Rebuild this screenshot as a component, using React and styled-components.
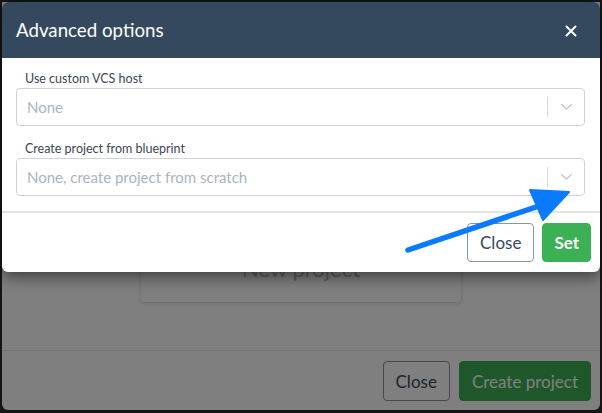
import React from "react";
import styled, { createGlobalStyle } from "styled-components";

const GlobalStyle = createGlobalStyle`
  html, body {
    margin: 0;
    padding: 0;
    background: #2b2b2b;
    font-family: "Lato", "Open Sans", sans-serif;
  }
`;

const Screen = styled.div`
  position: relative;
  width: 602px;
  height: 413px;
  box-sizing: border-box;
  padding: 2px 2px 3px 2px;
  overflow: hidden;
`;

const BaseDialog = styled.div`
  height: 100%;
  display: flex;
  flex-direction: column;
  background: #fff;
  border-radius: 0 0 6px 6px;
  overflow: hidden;
`;

const BaseBody = styled.div`
  flex: 1;
  display: flex;
  justify-content: center;
  align-items: flex-end;
  padding-bottom: 48px;
`;

const Card = styled.div`
  width: 320px;
  height: 80px;
  box-sizing: border-box;
  padding-top: 34px;
  text-align: center;
  font-size: 22px;
  line-height: 26px;
  color: #bcbcbc;
  border-radius: 4px;
  box-shadow: 0 1px 4px rgba(0, 0, 0, 0.18);
`;

const Footer = styled.div`
  display: flex;
  justify-content: flex-end;
  gap: ${(p) => p.gap}px;
  padding: 10px 9px ${(p) => p.bottom}px;
  border-top: 1px solid #e3e3e3;
`;

const Button = styled.button`
  height: ${(p) => p.h}px;
  padding: 0 ${(p) => p.px}px;
  border-radius: 4px;
  font-family: "Lato", "Open Sans", sans-serif;
  font-size: 17px;
  cursor: pointer;
  border: 1px solid ${(p) => (p.primary ? "#3cb054" : "#8796a3")};
  background: ${(p) => (p.primary ? "#3cb054" : "#fff")};
  color: ${(p) => (p.primary ? "#fff" : "#34495e")};
  font-weight: ${(p) => (p.bold ? 700 : 400)};
`;

const Overlay = styled.div`
  position: absolute;
  inset: 0;
  background: rgba(0, 0, 0, 0.5);
`;

const Modal = styled.div`
  position: absolute;
  left: 2px;
  right: 2px;
  top: 2px;
  height: 270px;
  background: #fff;
  border-radius: 6px;
  overflow: hidden;
  box-shadow: 0 5px 15px rgba(0, 0, 0, 0.5);
  display: flex;
  flex-direction: column;
`;

const Header = styled.div`
  height: 56px;
  flex-shrink: 0;
  background: #34495e;
  display: flex;
  align-items: center;
  justify-content: space-between;
  padding: 0 23px 0 14px;
  color: #fff;
`;

const Title = styled.h4`
  margin: 0;
  font-size: 18.7px;
  font-weight: 400;
  padding-bottom: 1px;
`;

const CloseX = styled.span`
  display: flex;
  padding-top: 1px;
`;

const Body = styled.div`
  padding: 13px 15px 15px 14px;
  display: flex;
  flex-direction: column;
  gap: 15px;
`;

const Field = styled.div`
  display: flex;
  flex-direction: column;
`;

const Label = styled.label`
  font-size: 12.5px;
  line-height: 16px;
  color: #3b4653;
  padding-left: 9px;
  margin-bottom: 1px;
`;

const Select = styled.div`
  height: 38px;
  box-sizing: border-box;
  border: 1px solid #cfd3d7;
  border-radius: 4px;
  display: flex;
  align-items: center;
`;

const Placeholder = styled.span`
  flex: 1;
  padding-left: 10px;
  font-size: 15px;
  color: #abb4be;
`;

const Indicator = styled.span`
  width: 36px;
  height: 20px;
  border-left: 1px solid #d4d7da;
  display: flex;
  align-items: center;
  justify-content: center;
`;

const Divider = styled.div`
  border-top: 1px solid #e5e5e5;
`;

const ArrowSvg = styled.svg`
  position: absolute;
  left: 0;
  top: 0;
  pointer-events: none;
`;

const Chevron = () => (
  <svg width="13" height="8" viewBox="0 0 13 8">
    <path d="M1.5 1.5 L6.5 6 L11.5 1.5" fill="none" stroke="#c5cbd1" strokeWidth="1.6" strokeLinecap="round" />
  </svg>
);

const SelectField = ({ label, placeholder }) => (
  <Field>
    <Label>{label}</Label>
    <Select>
      <Placeholder>{placeholder}</Placeholder>
      <Indicator>
        <Chevron />
      </Indicator>
    </Select>
  </Field>
);

export default function App() {
  return (
    <>
      <GlobalStyle />
      <Screen>
        <BaseDialog>
          <BaseBody>
            <Card>New project</Card>
          </BaseBody>
          <Footer gap={9} bottom={9}>
            <Button h={40} px={12}>Close</Button>
            <Button h={40} px={12} primary>Create project</Button>
          </Footer>
        </BaseDialog>
        <Overlay />
        <Modal>
          <Header>
            <Title>Advanced options</Title>
            <CloseX>
              <svg width="12" height="12" viewBox="0 0 12 12">
                <path d="M1.5 1.5 L10.5 10.5 M10.5 1.5 L1.5 10.5" stroke="#fff" strokeWidth="2" strokeLinecap="round" />
              </svg>
            </CloseX>
          </Header>
          <Body>
            <SelectField label="Use custom VCS host" placeholder="None" />
            <SelectField label="Create project from blueprint" placeholder="None, create project from scratch" />
          </Body>
          <Divider />
          <Footer gap={8} bottom={10}>
            <Button h={39} px={12}>Close</Button>
            <Button h={39} px={11} primary bold>Set</Button>
          </Footer>
        </Modal>
        <ArrowSvg width="602" height="413" viewBox="0 0 602 413">
          <path d="M408 250 L545 204" stroke="#0a7bff" strokeWidth="5.5" strokeLinecap="round" fill="none" />
          <path d="M569 192 L530 190 L543 220 Z" fill="#0a7bff" stroke="#0a7bff" strokeWidth="2" strokeLinejoin="round" />
        </ArrowSvg>
      </Screen>
    </>
  );
}
